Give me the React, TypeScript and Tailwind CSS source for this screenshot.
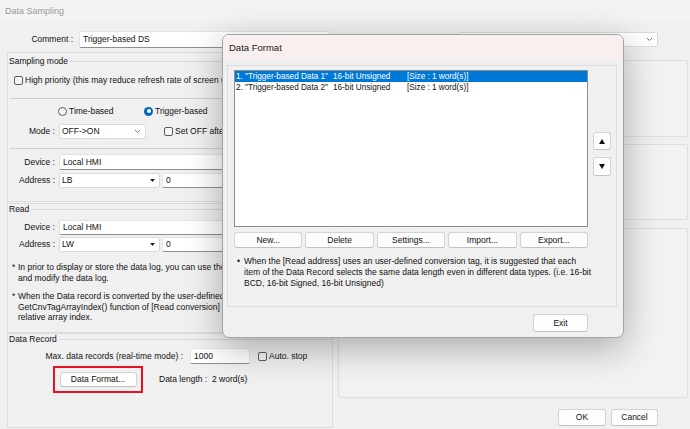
import React from "react";

function Check({ label, className = "" }: { label: string; className?: string }) {
  return (
    <div className={"flex items-center gap-[2px] " + className}>
      <span className="h-[9px] w-[9px] rounded-[2px] border border-[#5c5c5c] bg-[#f6f6f6]" />
      <span>{label}</span>
    </div>
  );
}

function Radio({ label, on, className = "" }: { label: string; on?: boolean; className?: string }) {
  return (
    <div className={"flex items-center gap-[2px] " + className}>
      {on ? (
        <span className="flex h-[9px] w-[9px] items-center justify-center rounded-full bg-[#0067c0]">
          <span className="h-[4px] w-[4px] rounded-full bg-white" />
        </span>
      ) : (
        <span className="h-[9px] w-[9px] rounded-full border border-[#5c5c5c] bg-[#f6f6f6]" />
      )}
      <span>{label}</span>
    </div>
  );
}

function Field({ children, className = "" }: { children?: React.ReactNode; className?: string }) {
  return (
    <div
      className={
        "flex items-center rounded-[2px] border border-[#e2e2e2] border-b-[#8e8e8e] bg-white pl-[3px] " + className
      }
    >
      {children}
    </div>
  );
}

function Chevron() {
  return (
    <svg width="7" height="5" viewBox="0 0 7 5" className="shrink-0">
      <path d="M1 1 L3.5 3.5 L6 1" fill="none" stroke="#6a6a6a" strokeWidth="0.9" />
    </svg>
  );
}

function Caret() {
  return (
    <svg width="5" height="3" viewBox="0 0 5 3" className="shrink-0">
      <polygon points="0,0 5,0 2.5,3" fill="#222" />
    </svg>
  );
}

function Select({
  children,
  className = "",
  caret,
}: {
  children?: React.ReactNode;
  className?: string;
  caret?: boolean;
}) {
  return (
    <div
      className={
        "flex items-center justify-between rounded-[2px] border border-[#dadada] bg-white pl-[2px] pr-[4px] " +
        className
      }
    >
      <span>{children}</span>
      {caret ? <Caret /> : <Chevron />}
    </div>
  );
}

function Btn({ children, className = "" }: { children?: React.ReactNode; className?: string }) {
  return (
    <div
      className={
        "flex items-center justify-center rounded-[3px] border border-[#d3d3d3] border-b-[#c2c2c2] bg-[#fdfdfd] " +
        className
      }
    >
      {children}
    </div>
  );
}

function GroupTitle({ title, className = "" }: { title: string; className?: string }) {
  return (
    <div className={"flex items-center " + className}>
      <span className="pl-[1px]">{title}</span>
      <span className="ml-[2px] h-px flex-1 bg-[#d8d8d8]" />
    </div>
  );
}

function Row({ n }: { n: number }) {
  return (
    <>
      <span className="w-[97px] flex-none whitespace-nowrap">{n}. "Trigger-based Data {n}"</span>
      <span className="w-[74px] flex-none whitespace-nowrap">16-bit Unsigned</span>
      <span className="whitespace-nowrap">[Size : 1 word(s)]</span>
    </>
  );
}

export default function App() {
  return (
    <div className="relative h-[429px] w-[690px] overflow-hidden bg-[#f0f0f0] text-[8.5px] leading-[11px] text-[#111] [font-family:'Liberation_Sans',Arial,sans-serif]">
      <div className="flex h-[22px] items-center bg-[#f3f3f3] pl-[5px] text-[9px] text-[#9a9a9a]">Data Sampling</div>

      <div className="mt-[9px] flex h-[17px] items-center">
        <div className="w-[73px] text-right">Comment :</div>
        <Field className="ml-[6px] h-[17px] w-[251px]">Trigger-based DS</Field>
        <Select className="ml-auto mr-[32px] h-[15px] w-[200px]" />
      </div>

      <div className="mt-[4px] flex">
        {/* left column */}
        <div className="ml-[7px] flex w-[326px] flex-col">
          <div className="h-[150px] border border-[#dcdcdc] pt-[3px]">
            <GroupTitle title="Sampling mode" className="h-[11px]" />
            <Check className="mt-[7px] h-[12px] pl-[6px]" label="High priority (this may reduce refresh rate of screen update)" />
            <div className="ml-[2px] mt-[12px] border-t border-[#cfcfcf]">
              <div className="mt-[6px] flex h-[12px] items-center pl-[48px]">
                <Radio label="Time-based" className="w-[86px]" />
                <Radio label="Trigger-based" on />
              </div>
              <div className="mt-[7px] flex h-[15px] items-center">
                <div className="w-[45px] text-right">Mode :</div>
                <Select className="ml-[4px] h-[15px] w-[87px]">OFF-&gt;ON</Select>
                <Check className="ml-[18px] whitespace-nowrap" label="Set OFF after sampling" />
              </div>
            </div>
            <div className="ml-[2px] mt-[9px] border-t border-[#cfcfcf]">
              <div className="mt-[5px] flex h-[16px] items-center">
                <div className="w-[45px] text-right">Device :</div>
                <Field className="ml-[4px] h-[16px] w-[260px]">Local HMI</Field>
              </div>
              <div className="mt-[3px] flex h-[15px] items-center">
                <div className="w-[45px] text-right">Address :</div>
                <Select className="ml-[4px] h-[15px] w-[101px]" caret>
                  LB
                </Select>
                <Field className="ml-[2px] h-[15px] w-[157px]">0</Field>
              </div>
            </div>
          </div>

          <div className="mt-[1px] h-[130px] overflow-hidden border border-[#dcdcdc]">
            <GroupTitle title="Read" className="h-[10px]" />
            <div className="mt-[6px] flex h-[15px] items-center">
              <div className="w-[47px] text-right">Device :</div>
              <Field className="ml-[4px] h-[15px] w-[260px]">Local HMI</Field>
            </div>
            <div className="mt-[2px] flex h-[15px] items-center">
              <div className="w-[47px] text-right">Address :</div>
              <Select className="ml-[4px] h-[15px] w-[101px]" caret>
                LW
              </Select>
              <Field className="ml-[2px] h-[15px] w-[157px]">0</Field>
            </div>
            <div className="mt-[10px] flex pl-[4px] leading-[10.5px]">
              <span className="w-[6px] shrink-0">*</span>
              <div className="whitespace-nowrap">
                <div>In prior to display or store the data log, you can use the History Data Viewer to view</div>
                <div>and modify the data log.</div>
              </div>
            </div>
            <div className="mt-[8px] flex pl-[4px] leading-[10.5px]">
              <span className="w-[6px] shrink-0">*</span>
              <div className="whitespace-nowrap">
                <div>When the Data record is converted by the user-defined conversion tag, use the</div>
                <div>GetCnvTagArrayIndex() function of [Read conversion] to get the</div>
                <div>relative array index.</div>
              </div>
            </div>
          </div>

          <div className="h-[95px] border border-[#dcdcdc]">
            <GroupTitle title="Data Record" className="h-[10px]" />
            <div className="mt-[4px] flex h-[16px] items-center">
              <div className="w-[175px] text-right">Max. data records (real-time mode) :</div>
              <Field className="ml-[7px] h-[16px] w-[60px]">1000</Field>
              <Check className="ml-[8px]" label="Auto. stop" />
            </div>
            <div className="mt-[2px] flex items-center">
              <div className="ml-[45px] border-2 border-[#e81123] px-[4.5px] py-[4px]">
                <Btn className="h-[15px] w-[77px]">Data Format...</Btn>
              </div>
              <div className="ml-[16px]">Data length :&nbsp; 2 word(s)</div>
            </div>
          </div>
        </div>

        {/* right column */}
        <div className="ml-[5px] flex w-[350px] flex-col pt-[8px]">
          <div className="h-[77px] rounded-[2px] border border-[#dedede] bg-[#f2f2f2]" />
          <div className="mt-[7px] h-[76px] rounded-[2px] border border-[#dedede] bg-[#f2f2f2]" />
          <div className="mt-[8px] h-[170px] rounded-[2px] border border-[#dedede] bg-[#f2f2f2]" />
          <div className="mt-[11px] flex justify-end gap-[5px] pr-[30px]">
            <Btn className="h-[17px] w-[48px]">OK</Btn>
            <Btn className="h-[17px] w-[47px]">Cancel</Btn>
          </div>
        </div>
      </div>

      {/* Data Format dialog */}
      <div className="absolute left-[222px] top-[34px] flex h-[304px] w-[402px] flex-col overflow-hidden rounded-[7px] border border-[#a3a3a3] bg-[#f0f0f0] shadow-[0_10px_36px_rgba(0,0,0,0.3)]">
        <div className="flex h-[24px] items-center bg-[#f8f0ee] pl-[6px] text-[9.5px] text-[#1a1a1a]">Data Format</div>
        <div className="ml-[4px] mt-[6px] h-[242px] w-[390px] border border-[#dcdcdc]">
          <div className="ml-[6px] mt-[4px] flex">
            <div className="h-[157px] w-[354px] border border-[#8c8c8c] bg-white text-[8.2px]">
              <div className="flex h-[11px] items-center bg-[#0078d7] pl-[1px] text-white">
                <Row n={1} />
              </div>
              <div className="flex h-[11px] items-center pl-[1px]">
                <Row n={2} />
              </div>
            </div>
            <div className="ml-[5px] mt-[62px] flex flex-col gap-[7px]">
              <Btn className="h-[18px] w-[18px]">
                <svg width="6" height="5" viewBox="0 0 6 5">
                  <polygon points="3,0 6,5 0,5" fill="#111" />
                </svg>
              </Btn>
              <Btn className="h-[19px] w-[18px]">
                <svg width="6" height="5" viewBox="0 0 6 5">
                  <polygon points="0,0 6,0 3,5" fill="#111" />
                </svg>
              </Btn>
            </div>
          </div>
          <div className="ml-[6px] mt-[5px] grid h-[16px] w-[354px] grid-cols-5 gap-[3px]">
            <Btn>New...</Btn>
            <Btn>Delete</Btn>
            <Btn>Settings...</Btn>
            <Btn>Import...</Btn>
            <Btn>Export...</Btn>
          </div>
          <div className="ml-[9px] mt-[8px] flex leading-[11px]">
            <span className="w-[7px] shrink-0">•</span>
            <div className="whitespace-nowrap">
              <div>When the [Read address] uses an user-defined conversion tag, it is suggested that each</div>
              <div>item of the Data Record selects the same data length even in different data types. (i.e. 16-bit</div>
              <div>BCD, 16-bit Signed, 16-bit Unsigned)</div>
            </div>
          </div>
        </div>
        <div className="mt-[7px] flex justify-end pr-[35px]">
          <Btn className="h-[18px] w-[55px] border-[#2f7fd0] border-b-[#2f7fd0]">Exit</Btn>
        </div>
      </div>
    </div>
  );
}
